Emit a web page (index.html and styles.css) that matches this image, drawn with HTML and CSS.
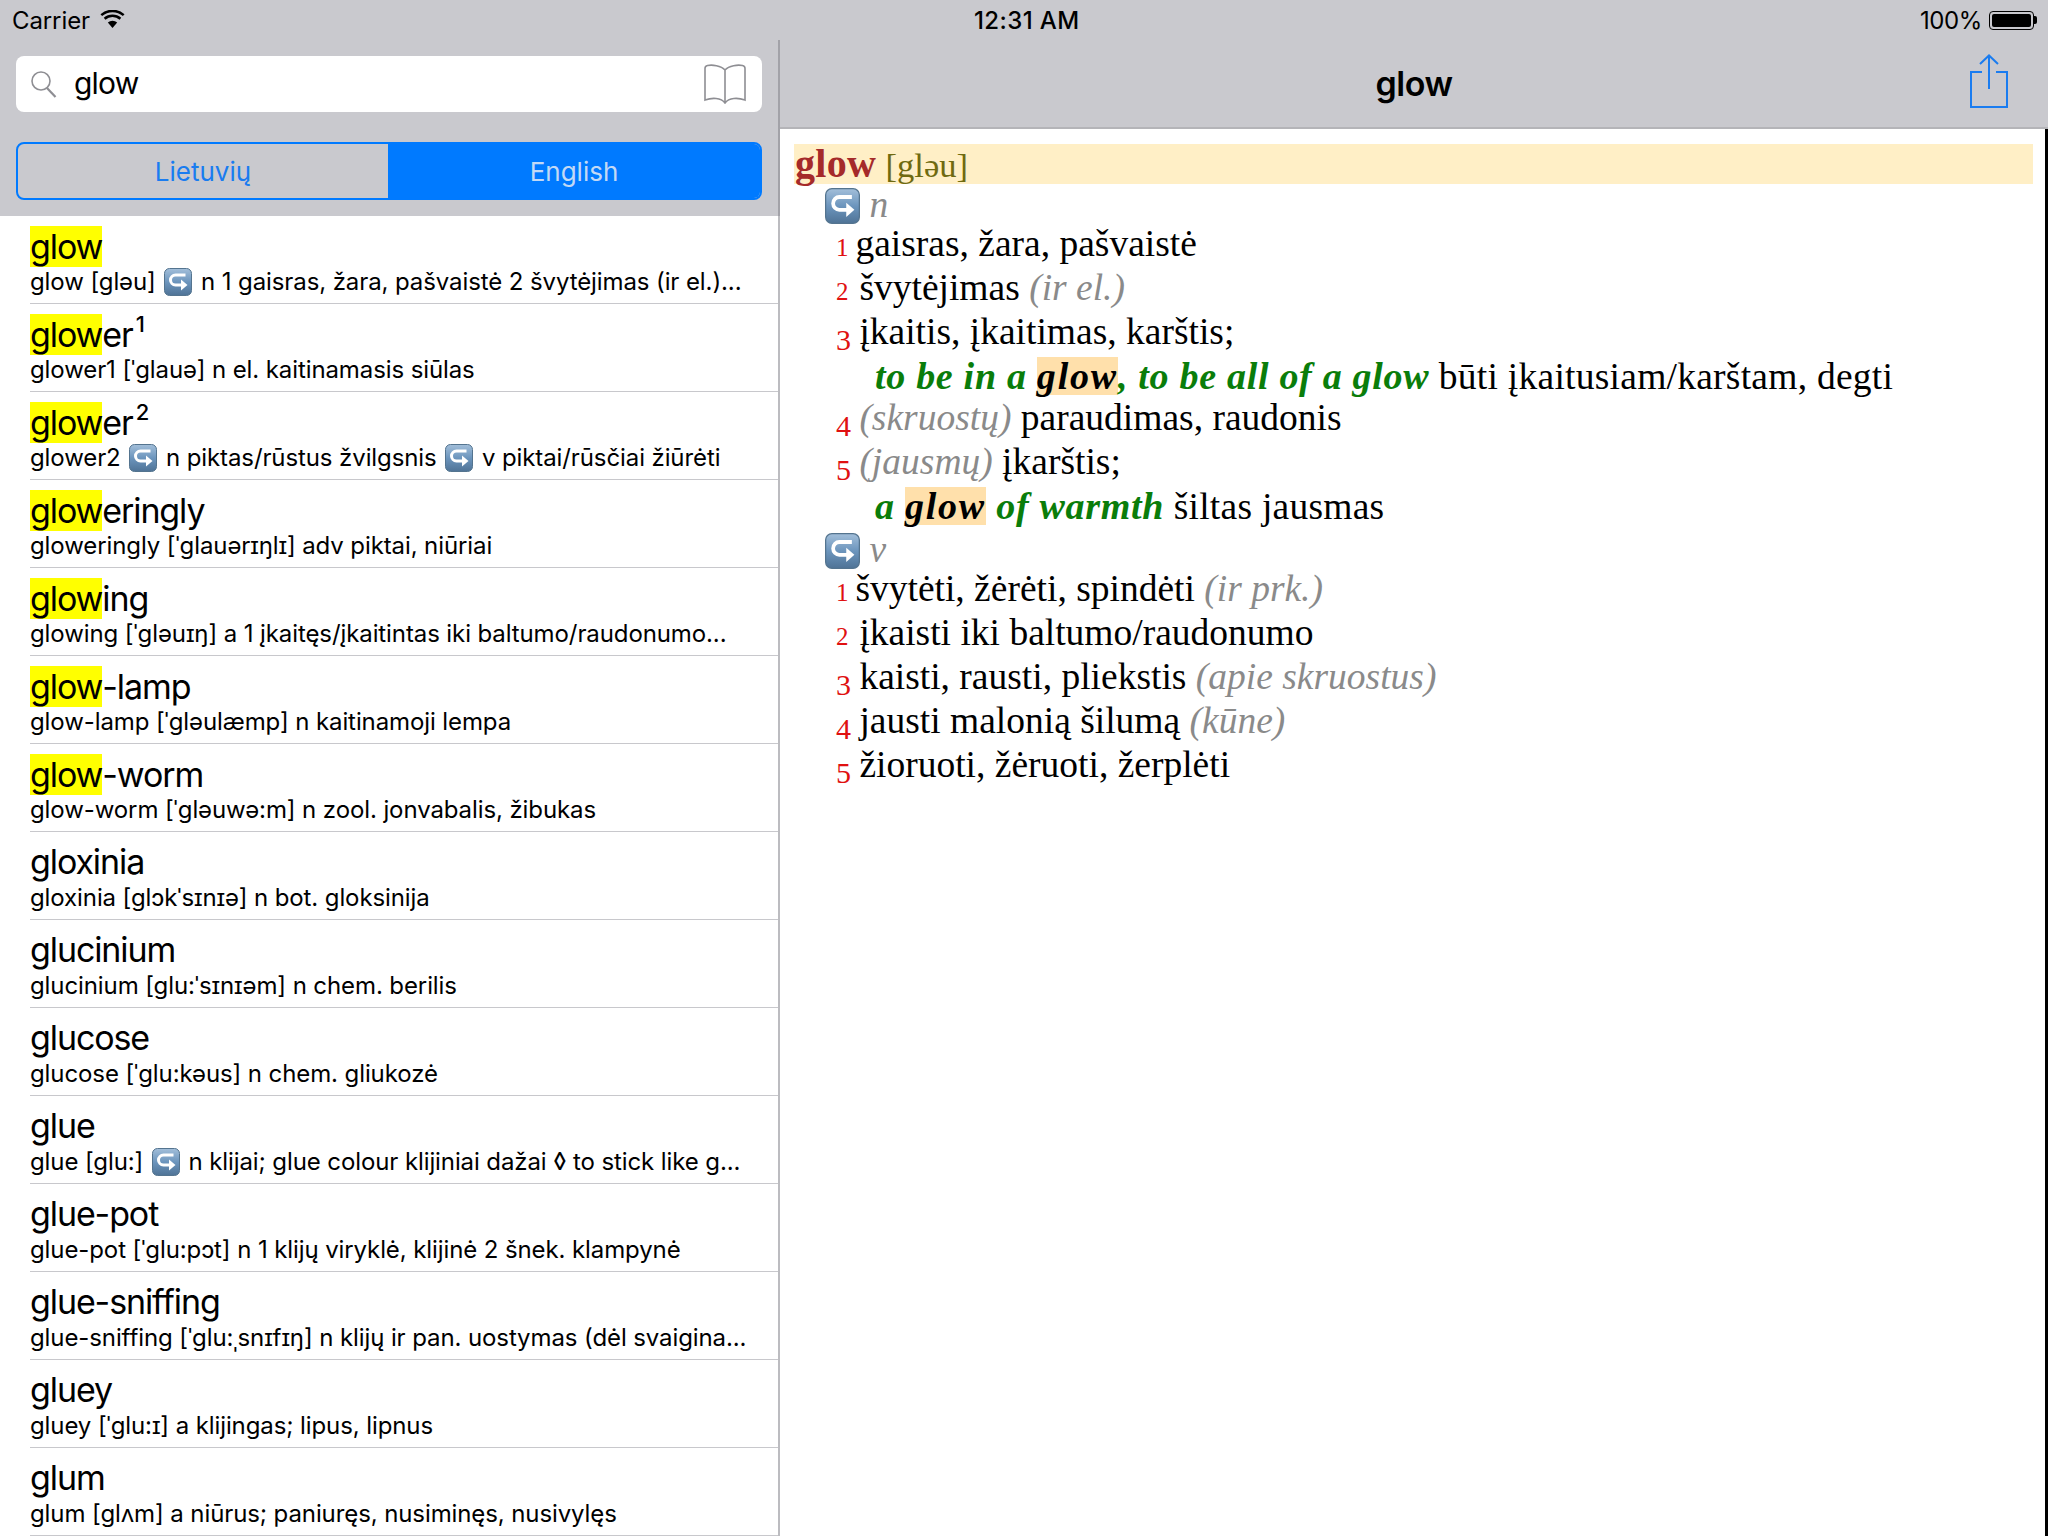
FILE: index.html
```html
<!DOCTYPE html>
<html lang="lt">
<head>
    <meta charset="UTF-8">
    <meta name="viewport" content="width=device-width, initial-scale=1.0">
    <title>glow</title>
    <link rel="stylesheet" href="styles.css">
</head>
<body>
    <svg class="defs" width="0" height="0">
        <defs>
            <linearGradient id="keyBlue" x1="0" y1="0" x2="0" y2="1">
                <stop offset="0" stop-color="#a3bfda"/>
                <stop offset="0.5" stop-color="#6c95bd"/>
                <stop offset="1" stop-color="#4f7396"/>
            </linearGradient>
            <symbol id="returnKey" viewBox="0 0 28 28" preserveAspectRatio="none">
                <rect x="0.5" y="0.5" width="27" height="27" rx="5" fill="url(#keyBlue)" stroke="#54748f"/>
                <path d="M21.500 7H11.500a5 5 0 0 0 0 10H18" fill="none" stroke="#fff" stroke-width="3"/>
                <path d="M17 11.500L23.500 17L17 22.500Z" fill="#fff"/>
            </symbol>
        </defs>
    </svg>

    <div class="app">
        <div class="sidebar">
            <div class="sidebar-head">
                <div class="status-left">
                    <span>Carrier</span>
                    <svg class="wifi" viewBox="0 0 25 18" width="25" height="18">
                        <path d="M12.500 18L7.800 12.500a7 7 0 0 1 9.400 0Z" fill="#000"/>
                        <path d="M4.600 8.800a12 12 0 0 1 15.800 0M1.300 5.100a17 17 0 0 1 22.400 0" fill="none" stroke="#000" stroke-width="2.500"/>
                    </svg>
                </div>
                <div class="head-controls">
                    <div class="search">
                        <svg class="search-icon" viewBox="0 0 28 28" width="28" height="28">
                            <circle cx="11" cy="11" r="9" fill="none" stroke="#8e8e93" stroke-width="1.600"/>
                            <path d="M17 18l8.500 9" fill="none" stroke="#8e8e93" stroke-width="2.200"/>
                        </svg>
                        <span class="search-text">glow</span>
                        <svg class="book-icon" viewBox="0 0 42 40" width="42" height="40">
                            <path d="M21 6C17 1.500 8 0.500 3.500 1.500Q1 2 1 4.500V36C8 33.500 17 33.500 21 39C25 33.500 34 33.500 41 36V4.500Q41 2 38.500 1.500C34 0.500 25 1.500 21 6ZM21 6V39" fill="none" stroke="#8e8e93" stroke-width="1.600"/>
                        </svg>
                    </div>
                    <div class="segments">
                        <div class="segment">Lietuvių</div>
                        <div class="segment active">English</div>
                    </div>
                </div>
            </div>
            <div class="word-list">
                <div class="word"><div class="word-title"><mark>glow</mark></div><div class="word-desc">glow [gləu] <svg class="key-small"><use href="#returnKey"/></svg> n 1 gaisras, žara, pašvaistė 2 švytėjimas (ir el.)...</div></div>
                <div class="word"><div class="word-title"><mark>glow</mark>er<sup>1</sup></div><div class="word-desc">glower1 [ˈglauə] n el. kaitinamasis siūlas</div></div>
                <div class="word"><div class="word-title"><mark>glow</mark>er<sup>2</sup></div><div class="word-desc">glower2 <svg class="key-small"><use href="#returnKey"/></svg> n piktas/rūstus žvilgsnis <svg class="key-small"><use href="#returnKey"/></svg> v piktai/rūsčiai žiūrėti</div></div>
                <div class="word"><div class="word-title"><mark>glow</mark>eringly</div><div class="word-desc">gloweringly [ˈglauərɪŋlɪ] adv piktai, niūriai</div></div>
                <div class="word"><div class="word-title"><mark>glow</mark>ing</div><div class="word-desc">glowing [ˈgləuɪŋ] a 1 įkaitęs/įkaitintas iki baltumo/raudonumo...</div></div>
                <div class="word"><div class="word-title"><mark>glow</mark>-lamp</div><div class="word-desc">glow-lamp [ˈgləulæmp] n kaitinamoji lempa</div></div>
                <div class="word"><div class="word-title"><mark>glow</mark>-worm</div><div class="word-desc">glow-worm [ˈgləuwə:m] n zool. jonvabalis, žibukas</div></div>
                <div class="word"><div class="word-title">gloxinia</div><div class="word-desc">gloxinia [glɔkˈsɪnɪə] n bot. gloksinija</div></div>
                <div class="word"><div class="word-title">glucinium</div><div class="word-desc">glucinium [glu:ˈsɪnɪəm] n chem. berilis</div></div>
                <div class="word"><div class="word-title">glucose</div><div class="word-desc">glucose [ˈglu:kəus] n chem. gliukozė</div></div>
                <div class="word"><div class="word-title">glue</div><div class="word-desc">glue [glu:] <svg class="key-small"><use href="#returnKey"/></svg> n klijai; glue colour klijiniai dažai ◊ to stick like g...</div></div>
                <div class="word"><div class="word-title">glue-pot</div><div class="word-desc">glue-pot [ˈglu:pɔt] n 1 klijų viryklė, klijinė 2 šnek. klampynė</div></div>
                <div class="word"><div class="word-title">glue-sniffing</div><div class="word-desc">glue-sniffing [ˈglu:ˌsnɪfɪŋ] n klijų ir pan. uostymas (dėl svaigina...</div></div>
                <div class="word"><div class="word-title">gluey</div><div class="word-desc">gluey [ˈglu:ɪ] a klijingas; lipus, lipnus</div></div>
                <div class="word"><div class="word-title">glum</div><div class="word-desc">glum [glʌm] a niūrus; paniuręs, nusiminęs, nusivylęs</div></div>
            </div>
        </div>

        <div class="detail">
            <div class="detail-head">
                <div class="status-bar">
                    <span class="clock">12:31 AM</span>
                    <div class="battery-wrap">
                        <span class="percent">100%</span>
                        <div class="battery"><div class="battery-fill"></div></div>
                        <div class="battery-tip"></div>
                    </div>
                </div>
                <div class="nav-bar">
                    <span class="nav-title">glow</span>
                    <svg class="share-icon" viewBox="0 0 40 56" width="40" height="56">
                        <path d="M13 19H2V54H38V19H27M20 36V3M11 11L20 2.500L29 11" fill="none" stroke="#1a7cf0" stroke-width="2"/>
                    </svg>
                </div>
            </div>
            <div class="entry">
                <div class="headword"><b>glow</b> <span class="phon">[gləu]</span></div>
                <div class="pos"><svg class="key-large"><use href="#returnKey"/></svg> <i>n</i></div>
                <div class="sense"><span class="num low one">1</span> gaisras, žara, pašvaistė</div>
                <div class="sense"><span class="num low">2</span> švytėjimas <i class="note">(ir el.)</i></div>
                <div class="sense"><span class="num">3</span> įkaitis, įkaitimas, karštis;</div>
                <div class="example"><span class="phrase">to be in a <span class="hit">glow</span>, to be all of a glow</span> būti įkaitusiam/karštam, degti</div>
                <div class="sense"><span class="num">4</span> <i class="note">(skruostų)</i> paraudimas, raudonis</div>
                <div class="sense"><span class="num">5</span> <i class="note">(jausmų)</i> įkarštis;</div>
                <div class="example"><span class="phrase">a <span class="hit">glow</span> of warmth</span> šiltas jausmas</div>
                <div class="pos"><svg class="key-large"><use href="#returnKey"/></svg> <i>v</i></div>
                <div class="sense"><span class="num low one">1</span> švytėti, žėrėti, spindėti <i class="note">(ir prk.)</i></div>
                <div class="sense"><span class="num low">2</span> įkaisti iki baltumo/raudonumo</div>
                <div class="sense"><span class="num">3</span> kaisti, rausti, pliekstis <i class="note">(apie skruostus)</i></div>
                <div class="sense"><span class="num">4</span> jausti malonią šilumą <i class="note">(kūne)</i></div>
                <div class="sense"><span class="num">5</span> žioruoti, žėruoti, žerplėti</div>
            </div>
        </div>
    </div>
</body>
</html>
```
FILE: styles.css
```css
* {
    box-sizing: border-box;
}
html, body {
    margin: 0;
    height: 100%;
    overflow: hidden;
}
body {
    background-color: #fff;
    font-family: Inter, "Liberation Sans", Arial, sans-serif;
    color: #000;
}
.defs {
    position: absolute;
}
.app {
    display: flex;
    height: 1536px;
}

/* left column */
.sidebar {
    width: 780px;
    flex-shrink: 0;
    overflow: hidden;
}
.sidebar-head {
    height: 216px;
    background-color: #c9c9ce;
}
.status-left {
    display: flex;
    align-items: center;
    gap: 10px;
    height: 40px;
    padding-left: 12px;
    font-size: 24px;
    letter-spacing: -0.1px;
}
.wifi {
    margin-top: -2px;
}
.head-controls {
    height: 176px;
    padding: 16px 16px 0;
    border-right: 2px solid #a2a2a8;
}
.search {
    display: flex;
    align-items: center;
    height: 56px;
    padding: 0 16px 0 14px;
    background-color: #fff;
    border-radius: 8px;
}
.search-text {
    margin-left: 16px;
    margin-top: -2px;
    font-size: 30px;
    letter-spacing: -0.8px;
    flex: 1;
}
.segments {
    display: flex;
    height: 58px;
    margin-top: 30px;
    border: 2px solid #007aff;
    border-radius: 8px;
    overflow: hidden;
    font-size: 26px;
}
.segment {
    flex: 1;
    display: flex;
    align-items: center;
    justify-content: center;
    color: #1a7cf0;
}
.segment:first-child {
    flex: none;
    width: 370px;
}
.segment.active {
    background-color: #007aff;
    color: #c2d9f5;
}
.word-list {
    height: 1320px;
    border-right: 2px solid #bcbcc0;
}
.word {
    height: 88px;
    margin-left: 30px;
    border-bottom: 1px solid #c8c8cc;
    padding-top: 10px;
}
.word-title {
    height: 41px;
    font-size: 34px;
    line-height: 40px;
    letter-spacing: -1.1px;
}
.word-title mark {
    background-color: #ff0;
    color: #000;
    display: inline-block;
    line-height: 41px;
}
.word-title sup {
    font-size: 22px;
    font-weight: 500;
    line-height: 0;
    vertical-align: 15px;
    margin-left: 3px;
}
.word-desc {
    height: 30px;
    font-size: 24px;
    line-height: 30px;
    letter-spacing: -0.1px;
    white-space: nowrap;
}
.key-small {
    width: 28px;
    height: 28px;
    vertical-align: -6px;
    margin: 0 2px;
}

/* right column */
.detail {
    flex: 1;
    min-width: 0;
}
.detail-head {
    height: 129px;
    background-color: #c9c9ce;
    border-bottom: 2px solid #b4b4b8;
}
.status-bar {
    display: flex;
    justify-content: space-between;
    height: 40px;
    align-items: center;
    padding: 0 11px 0 194px;
    font-size: 24px;
}
.clock {
    font-weight: 500;
    letter-spacing: 0.4px;
}
.percent {
    letter-spacing: -0.4px;
}
.battery-wrap {
    display: flex;
    align-items: center;
}
.battery {
    width: 45px;
    height: 19px;
    margin-left: 7px;
    padding: 2px;
    border: 1px solid #000;
    border-radius: 4px;
}
.battery-fill {
    height: 100%;
    background-color: #000;
    border-radius: 2px;
}
.battery-tip {
    width: 3px;
    height: 8px;
    background-color: #000;
    border-radius: 0 2px 2px 0;
}
.nav-bar {
    display: flex;
    align-items: center;
    justify-content: center;
    position: relative;
    height: 87px;
}
.nav-title {
    font-size: 34px;
    font-weight: 600;
    letter-spacing: -0.5px;
}
.share-icon {
    position: absolute;
    right: 39px;
    top: 13px;
}
.entry {
    height: 1407px;
    padding: 15px 12px 0 14px;
    border-right: 3px solid #000;
    font-family: "Liberation Serif", "Times New Roman", serif;
    font-size: 37.5px;
    line-height: 44px;
}
.headword {
    height: 40px;
    padding-left: 1px;
    line-height: 40px;
    background-color: #ffefc6;
    white-space: nowrap;
}
.headword b {
    color: #a52a2a;
    font-size: 40px;
    letter-spacing: 0.3px;
}
.phon {
    color: #6f6a10;
    font-size: 34.5px;
}
.pos {
    height: 36px;
    margin-top: 2px;
    padding-left: 31px;
    line-height: 38px;
    color: #8a8a8a;
}
.example + .pos {
    margin-top: 5px;
}
.key-large {
    width: 35px;
    height: 36px;
    vertical-align: -7px;
}
.sense {
    height: 44px;
    padding-left: 42px;
    white-space: nowrap;
}
.num {
    display: inline-block;
    width: 14px;
    line-height: 0;
    color: #e01010;
    font-size: 30px;
    vertical-align: -6px;
}
.num.low {
    font-size: 25px;
    vertical-align: 0;
}
.num.one {
    width: 10px;
}
.note {
    color: #8a8a8a;
}
.example {
    height: 42px;
    padding-left: 81px;
    letter-spacing: 0.25px;
    white-space: nowrap;
}
.phrase {
    color: #0a7d0a;
    font-size: 38px;
    font-weight: bold;
    font-style: italic;
    letter-spacing: 0.7px;
}
.hit {
    display: inline-block;
    line-height: 38px;
    background-color: #ffe0ab;
    color: #000;
    letter-spacing: 1.8px;
}
```
